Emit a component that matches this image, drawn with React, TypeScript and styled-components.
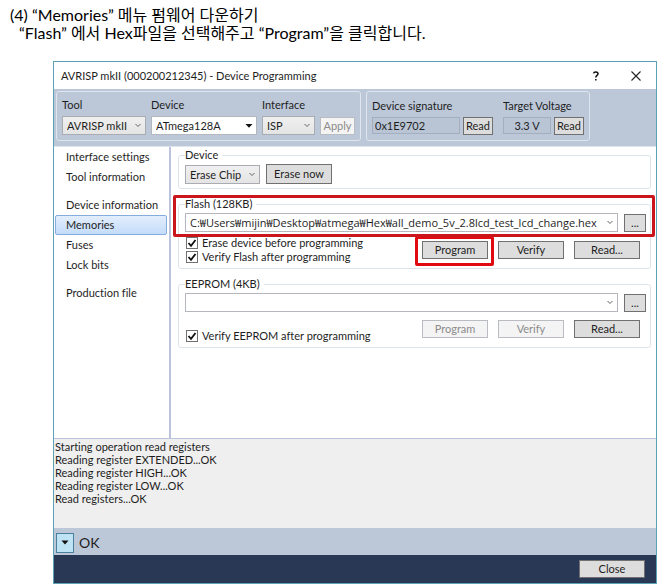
import React from "react";
import styled, { createGlobalStyle } from "styled-components";

const GlobalStyle = createGlobalStyle`
  *, *::before, *::after { box-sizing: border-box; }
  body {
    margin: 0;
    background: #fff;
    color: #1e1e1e;
    font-family: Lato, "Noto Sans CJK KR", sans-serif;
    font-size: 11px;
    line-height: 16px;
    font-variant-ligatures: none;
  }
  button, input, select { font: inherit; color: inherit; margin: 0; }
`;

const Page = styled.main`
  min-height: 100vh;
  display: flex;
  flex-direction: column;
`;

const Instructions = styled.header`
  padding: 6px 10px 0;
  font-size: 16px;
  line-height: 18px;
  color: #000;
`;

const Step = styled.p<{ $indent?: boolean }>`
  margin: 0;
  padding-left: ${(p) => (p.$indent ? 9 : 0)}px;
`;

const Dialog = styled.section`
  flex: 1;
  display: flex;
  flex-direction: column;
  margin: 19px 1px 1px 53px;
  border: 1px solid #5ba3b4;
  background: #fff;
`;

const TitleBar = styled.div`
  height: 27px;
  display: flex;
  align-items: center;
  padding: 0 0 0 7px;
`;

const Title = styled.h1`
  flex: 1;
  margin: 0;
  font-size: 11px;
  font-weight: 400;
`;

const TitleButton = styled.button`
  width: 40px;
  height: 24px;
  padding: 0;
  border: 0;
  background: none;
  display: grid;
  place-items: center;
`;

const Toolbar = styled.div`
  display: flex;
  gap: 5px;
  padding: 2px 2px 5px;
  background: #bcc7d8;
`;

const ToolGroup = styled.div<{ $gap?: number }>`
  display: flex;
  align-items: flex-end;
  gap: ${(p) => p.$gap ?? 5}px;
  height: 50px;
  padding: 5px;
  border: 1px solid #dfe5ee;
  border-radius: 3px;
`;

const Pair = styled.div`
  display: flex;
  align-items: flex-end;
  gap: 3px;
`;

const Field = styled.label<{ $width: number }>`
  width: ${(p) => p.$width}px;
  display: flex;
  flex-direction: column;
  gap: 3px;
  white-space: nowrap;
`;

const SelectWrap = styled.span`
  position: relative;
  display: block;
  flex: 1;
  min-width: 0;
`;

const Chevron = styled.svg`
  position: absolute;
  right: 4px;
  top: 6px;
  pointer-events: none;
`;

const SelectBox = styled.select<{ $white?: boolean; $path?: boolean }>`
  appearance: none;
  display: block;
  width: 100%;
  height: 19px;
  padding: 0 13px 0 4px;
  border: 1px solid ${(p) => (p.$white ? "#b4b8be" : "#a9adb3")};
  border-radius: 0;
  background: ${(p) => (p.$white ? "#fff" : "linear-gradient(#f0f0f0, #e4e4e4)")};
  ${(p) => p.$path && `font-family: "Open Sans", "Noto Sans CJK KR", sans-serif;`}
  line-height: 16px;
`;

const Readout = styled.input<{ $center?: boolean }>`
  width: 100%;
  height: 17px;
  margin-bottom: 1px;
  padding: 0 2px;
  border: 1px solid #a3aebf;
  background: #b9c4d5;
  text-align: ${(p) => (p.$center ? "center" : "left")};
`;

const Button = styled.button<{ $width: number; $height?: number }>`
  flex: none;
  width: ${(p) => p.$width}px;
  height: ${(p) => p.$height ?? 18}px;
  padding: 0;
  border: 1px solid #707070;
  background: #dddddd;
  line-height: 14px;
  text-align: center;
  &:disabled {
    border-color: #b9bdc1;
    background: #f4f4f4;
    color: #8b8b8b;
  }
`;

const Body = styled.div`
  flex: 1;
  display: flex;
  border-top: 1px solid #dfe5ee;
`;

const Nav = styled.nav`
  width: 117px;
  flex: none;
  padding: 0 2px 0 1px;
  border-right: 2px solid #bcc3dd;
`;

const NavGroup = styled.div`
  margin-bottom: 8px;
`;

const NavLink = styled.a<{ $active?: boolean }>`
  display: block;
  height: 20px;
  padding: 0 10px;
  border: 1px solid ${(p) => (p.$active ? "#84acdd" : "transparent")};
  border-radius: 2px;
  background: ${(p) => (p.$active ? "linear-gradient(#e3eefc, #c4dcfa)" : "none")};
  color: inherit;
  line-height: 18px;
  text-decoration: none;
  white-space: nowrap;
`;

const Panels = styled.div`
  flex: 1;
  min-width: 0;
  display: flex;
  flex-direction: column;
  gap: 7px;
  padding: 0 5px 0 7px;
`;

const Group = styled.fieldset`
  position: relative;
  min-width: 0;
  margin: 0;
  padding: 1px 4px 4px 6px;
  border: 1px solid #dde5ea;
  border-radius: 3px;
`;

const Legend = styled.legend`
  padding: 0 4px 0 0;
  height: 16px;
`;

const Row = styled.div`
  display: flex;
  align-items: flex-end;
  gap: 6px;
`;

const Actions = styled.div<{ $low?: boolean }>`
  display: flex;
  justify-content: space-between;
  align-items: ${(p) => (p.$low ? "flex-end" : "center")};
  padding: 4px 6px 0 0;
`;

const Buttons = styled.div<{ $raised?: boolean }>`
  display: flex;
  gap: 10px;
  padding: ${(p) => (p.$raised ? "4px 0 5px" : "0")};
`;

const CheckLabel = styled.label`
  display: flex;
  align-items: center;
  gap: 4px;
  height: 14px;
  padding-left: 1px;
`;

const CheckBox = styled.input`
  appearance: none;
  width: 12px;
  height: 12px;
  border: 1px solid #707070;
  background: #fff;
`;

const CheckWrap = styled.span`
  position: relative;
  display: grid;
`;

const CheckMark = styled.svg`
  position: absolute;
  inset: 0;
  pointer-events: none;
`;

const Highlight = styled.div`
  position: absolute;
  border: 3px solid #c9151b;
  border-radius: 2px;
  pointer-events: none;
`;

const FileHighlight = styled(Highlight)`
  inset: -17px -5px auto -6px;
  height: 42px;
`;

const ProgramHighlight = styled(Highlight)`
  border-color: #e00a10;
  inset: -5px -6px -7px -7px;
`;

const ProgramSlot = styled.div`
  position: relative;
  display: grid;
`;

const Log = styled.div`
  height: 90px;
  padding: 1px 1px 0;
  border-top: 1px solid #bcc3dd;
  background: #efefef;
  line-height: 13px;
`;

const StatusBar = styled.div`
  height: 27px;
  display: flex;
  align-items: center;
  gap: 5px;
  padding: 2px 2px 0;
  background: #bcc7d8;
  font-size: 14px;
`;

const Expander = styled.button`
  width: 18px;
  height: 20px;
  padding: 0;
  border: 1px solid #4c7f9c;
  background: #bee3f5;
  display: grid;
  place-items: center;
`;

const Footer = styled.footer`
  height: 28px;
  display: flex;
  justify-content: flex-end;
  align-items: center;
  padding: 0 11px;
  background: #293955;
`;

type SelectProps = { value: string; label?: string; white?: boolean; solid?: boolean; path?: boolean };

function Select({ value, label, white, solid, path }: SelectProps) {
  return (
    <SelectWrap>
      <SelectBox $white={white} $path={path} aria-label={label} defaultValue={value}>
        <option>{value}</option>
      </SelectBox>
      <Chevron width="8" height="8" viewBox="0 0 8 8">
        {solid ? (
          <path d="M.5 2h7L4 5.8z" fill="#111" />
        ) : (
          <path d="M1.5 2L4 4.5L6.5 2" fill="none" stroke="#666" />
        )}
      </Chevron>
    </SelectWrap>
  );
}

function Check({ children }: { children: React.ReactNode }) {
  return (
    <CheckLabel>
      <CheckWrap>
        <CheckBox type="checkbox" defaultChecked />
        <CheckMark width="12" height="12" viewBox="0 0 12 12">
          <path d="M2.5 6L5 8.8L9.5 3" fill="none" stroke="#111" strokeWidth="1.8" />
        </CheckMark>
      </CheckWrap>
      {children}
    </CheckLabel>
  );
}

const navGroups = [
  ["Interface settings", "Tool information"],
  ["Device information", "Memories", "Fuses", "Lock bits"],
  ["Production file"],
];

const logLines = [
  "Starting operation read registers",
  "Reading register EXTENDED...OK",
  "Reading register HIGH...OK",
  "Reading register LOW...OK",
  "Read registers...OK",
];

export default function App() {
  return (
    <Page>
      <GlobalStyle />
      <Instructions>
        <Step>(4) “Memories” 메뉴 펌웨어 다운하기</Step>
        <Step $indent>“Flash” 에서 Hex파일을 선택해주고 “Program”을 클릭합니다.</Step>
      </Instructions>
      <Dialog>
        <TitleBar>
          <Title>AVRISP mkII (000200212345) - Device Programming</Title>
          <TitleButton aria-label="Help">
            <svg width="8" height="10" viewBox="0 0 8 10" fill="none" stroke="#111" strokeWidth="1.5">
              <path d="M1.6 2.4C1.8 .4 6 .3 6 2.7C6 4.4 3.8 4.3 3.8 6.6M3.8 8v1.6" />
            </svg>
          </TitleButton>
          <TitleButton aria-label="Close window">
            <svg width="10" height="10" viewBox="0 0 10 10" stroke="#222" strokeWidth="1.1">
              <path d="M.5 .5L9.5 9.5M9.5 .5L.5 9.5" />
            </svg>
          </TitleButton>
        </TitleBar>
        <Toolbar>
          <ToolGroup>
            <Field $width={84}>
              Tool
              <Select value="AVRISP mkII" />
            </Field>
            <Field $width={106}>
              Device
              <Select value="ATmega128A" white solid />
            </Field>
            <Field $width={53}>
              Interface
              <Select value="ISP" />
            </Field>
            <Button $width={35} disabled>Apply</Button>
          </ToolGroup>
          <ToolGroup $gap={10}>
            <Pair>
              <Field $width={88}>
                Device signature
                <Readout readOnly value="0x1E9702" />
              </Field>
              <Button $width={30}>Read</Button>
            </Pair>
            <Pair>
              <Field $width={48}>
                Target Voltage
                <Readout readOnly value="3.3 V" $center />
              </Field>
              <Button $width={30}>Read</Button>
            </Pair>
          </ToolGroup>
        </Toolbar>
        <Body>
          <Nav>
            {navGroups.map((group) => (
              <NavGroup key={group[0]}>
                {group.map((name) => (
                  <NavLink key={name} href="#" $active={name === "Memories"}>{name}</NavLink>
                ))}
              </NavGroup>
            ))}
          </Nav>
          <Panels>
            <Group>
              <Legend>Device</Legend>
              <Row>
                <Field $width={75}>
                  <Select value="Erase Chip" label="Erase target" />
                </Field>
                <Button $width={66} $height={20}>Erase now</Button>
              </Row>
            </Group>
            <Group>
              <Legend>Flash (128KB)</Legend>
              <Row>
                <Select
                  value="C:₩Users₩mijin₩Desktop₩atmega₩Hex₩all_demo_5v_2.8lcd_test_lcd_change.hex"
                  label="Flash file"
                  white
                  path
                />
                <Button $width={22} aria-label="Browse flash file">...</Button>
              </Row>
              <Actions>
                <div>
                  <Check>Erase device before programming</Check>
                  <Check>Verify Flash after programming</Check>
                </div>
                <Buttons>
                  <ProgramSlot>
                    <Button $width={66}>Program</Button>
                    <ProgramHighlight />
                  </ProgramSlot>
                  <Button $width={66}>Verify</Button>
                  <Button $width={66}>Read...</Button>
                </Buttons>
              </Actions>
              <FileHighlight />
            </Group>
            <Group>
              <Legend>EEPROM (4KB)</Legend>
              <Row>
                <Select value="" label="EEPROM file" white path />
                <Button $width={22} aria-label="Browse EEPROM file">...</Button>
              </Row>
              <Actions $low>
                <Check>Verify EEPROM after programming</Check>
                <Buttons $raised>
                  <Button $width={66} disabled>Program</Button>
                  <Button $width={66} disabled>Verify</Button>
                  <Button $width={66}>Read...</Button>
                </Buttons>
              </Actions>
            </Group>
          </Panels>
        </Body>
        <Log>
          {logLines.map((line) => (
            <div key={line}>{line}</div>
          ))}
        </Log>
        <StatusBar>
          <Expander aria-label="Toggle log">
            <svg width="8" height="5" viewBox="0 0 8 5"><path d="M.5 .5h7L4 4.5z" fill="#111" /></svg>
          </Expander>
          OK
        </StatusBar>
        <Footer>
          <Button $width={66}>Close</Button>
        </Footer>
      </Dialog>
    </Page>
  );
}
